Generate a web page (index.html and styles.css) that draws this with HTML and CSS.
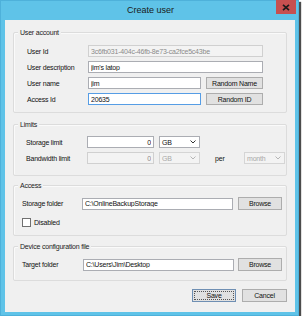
FILE: index.html
```html
<!DOCTYPE html>
<html>
<head>
<meta charset="utf-8">
<link rel="stylesheet" href="styles.css">
</head>
<body>
<div class="window">
  <div class="titlebar">
    <span></span>
    <span class="title">Create user</span>
    <span class="close-cell">
      <span class="close">
        <svg width="8" height="7" viewBox="0 0 8 7"><path d="M1 0.8 L7 6.2 M7 0.8 L1 6.2" stroke="#1b1b1b" stroke-width="1.7" fill="none"/></svg>
      </span>
    </span>
  </div>
  <div class="client">
    <div class="group g1">
      <span class="legend">User account</span>
      <div class="row"><span class="lbl w61">User Id</span><input class="tb disabled w175" value="3c6fb031-404c-46fb-8e73-ca2fce5c43be" readonly></div>
      <div class="row"><span class="lbl w61">User description</span><input class="tb w175" value="jim's latop" readonly></div>
      <div class="row"><span class="lbl w61">User name</span><input class="tb w113" value="jim" readonly><span class="btn w57">Random Name</span></div>
      <div class="row"><span class="lbl w61">Access Id</span><input class="tb focus w113" value="20635" readonly><span class="btn w57">Random ID</span></div>
    </div>

    <div class="group g2">
      <span class="legend">Limits</span>
      <div class="row"><span class="lbl w61">Storage limit</span><input class="tb num w67" value="0" readonly><span class="sel w41"><span>GB</span><svg width="6" height="4" viewBox="0 0 6 4"><path d="M0.5 0.5 L3 3 L5.5 0.5" stroke="#333" stroke-width="1" fill="none"/></svg></span></div>
      <div class="row"><span class="lbl w61">Bandwidth limit</span><input class="tb num disabled w67" value="0" readonly><span class="sel off w41"><span>GB</span><svg width="6" height="4" viewBox="0 0 6 4"><path d="M0.5 0.5 L3 3 L5.5 0.5" stroke="#b5b5b5" stroke-width="1" fill="none"/></svg></span><span class="per">per</span><span class="sel off w41"><span>month</span><svg width="6" height="4" viewBox="0 0 6 4"><path d="M0.5 0.5 L3 3 L5.5 0.5" stroke="#b5b5b5" stroke-width="1" fill="none"/></svg></span></div>
    </div>

    <div class="group g3">
      <span class="legend">Access</span>
      <div class="row r13"><span class="lbl w60">Storage folder</span><input class="tb w151" value="C:\OnlineBackupStorage" readonly><span class="btn w44 h13">Browse</span></div>
      <div class="row check"><span class="cb"></span><span class="lbl">Disabled</span></div>
    </div>

    <div class="group g4">
      <span class="legend">Device configuration file</span>
      <div class="row r13"><span class="lbl w61">Target folder</span><input class="tb w151" value="C:\Users\Jim\Desktop" readonly><span class="btn w44 h13 g4b">Browse</span></div>
    </div>

    <div class="actions">
      <span class="btn default w44 h13">Save</span>
      <span class="btn w45 h13">Cancel</span>
    </div>
  </div>
</div>
</body>
</html>
```

FILE: styles.css
```css
* { box-sizing: border-box; }
html, body { margin: 0; padding: 0; background: #fff; }
body {
  font-family: "Liberation Sans", Arial, sans-serif;
  font-size: 7px;
  letter-spacing: -0.2px;
  color: #111;
}
.window {
  width: 299px;
  height: 316px;
  background: #5fc3e8;
  box-shadow: inset 0 0 0 1px #4eb1da, 2px 2px 1px rgba(0,0,0,0.7);
  display: flex;
  flex-direction: column;
}
.titlebar {
  height: 20px;
  display: grid;
  grid-template-columns: 1fr auto 1fr;
  align-items: start;
}
.title {
  font-size: 9px;
  letter-spacing: 0;
  color: #1a1a1a;
  line-height: 20px;
  padding-left: 2px;
}
.close-cell { display: flex; justify-content: flex-end; padding-right: 3px; }
.close {
  width: 20px;
  height: 14px;
  background: #c75050;
  display: flex;
  align-items: center;
  justify-content: center;
}
.client {
  margin: 0 4px 4px 5px;
  height: 292px;
  background: #f0f0f0;
  padding: 12px 8px 0 8px;
  display: flex;
  flex-direction: column;
}
.group {
  position: relative;
  border: 1px solid #dcdcdc;
  border-radius: 2px;
  box-shadow: inset 1px 1px 0 #fafafa;
  display: flex;
  flex-direction: column;
}
.legend {
  position: absolute;
  top: -5px;
  left: 4px;
  padding: 0 2px;
  line-height: 9px;
  background: #f0f0f0;
  color: #222;
}
.g1 { height: 81px; padding: 12px 0 7px 13px; gap: 4px; }
.g2 { height: 52px; margin-top: 11px; padding: 11px 0 11px 12px; gap: 4px; }
.g3 { height: 51px; margin-top: 9px; padding: 11px 0 7px 8px; gap: 6px; }
.g4 { height: 35px; margin-top: 10px; padding: 11px 0 9px 8px; }

.row { display: flex; align-items: center; height: 12px; }
.r13 { height: 13px; }
.lbl { color: #111; white-space: nowrap; }
.w60 { width: 60px; flex: none; }
.w61 { width: 61px; flex: none; }
.tb {
  height: 12px;
  border: 1px solid #abadb3;
  background: #fff;
  font: inherit;
  letter-spacing: inherit;
  color: #111;
  padding: 0 2px;
  margin: 0;
  outline: none;
  flex: none;
}
.tb.focus { border-color: #569de5; }
.tb.disabled { background: #f3f3f3; border-color: #d0d0d0; color: #8a8a8a; }
.tb.num { text-align: right; padding-right: 2px; }
.w175 { width: 175px; }
.w113 { width: 113px; }
.w67 { width: 67px; }
.w151 { width: 151px; }
.w57 { width: 57px; }
.w44 { width: 44px; }
.w45 { width: 45px; }
.w41 { width: 41px; }
.btn {
  height: 12px;
  margin-left: 5px;
  border: 1px solid #adadad;
  background: #e1e1e1;
  display: flex;
  align-items: center;
  justify-content: center;
  flex: none;
  color: #111;
}
.h13 { height: 13px; }
.g4b { margin-left: 4px; }
.sel {
  height: 12px;
  margin-left: 5px;
  border: 1px solid #abadb3;
  background: #fff;
  display: flex;
  align-items: center;
  justify-content: space-between;
  padding: 0 3px 0 2px;
  flex: none;
}
.sel.off { border-color: #d5d5d5; background: #f3f3f3; color: #a8a8a8; }
.per { width: 24px; margin-left: 15px; flex: none; color: #111; }
.check { gap: 3px; }
.cb {
  width: 9px;
  height: 9px;
  border: 1px solid #707070;
  background: #fff;
  flex: none;
}
.actions {
  margin-top: 8px;
  display: flex;
  justify-content: flex-end;
  gap: 6px;
}
.actions .btn { margin-left: 0; }
.btn.default {
  border-color: #6f8fb3;
  outline: 1px dotted #555;
  outline-offset: -3px;
}
```
